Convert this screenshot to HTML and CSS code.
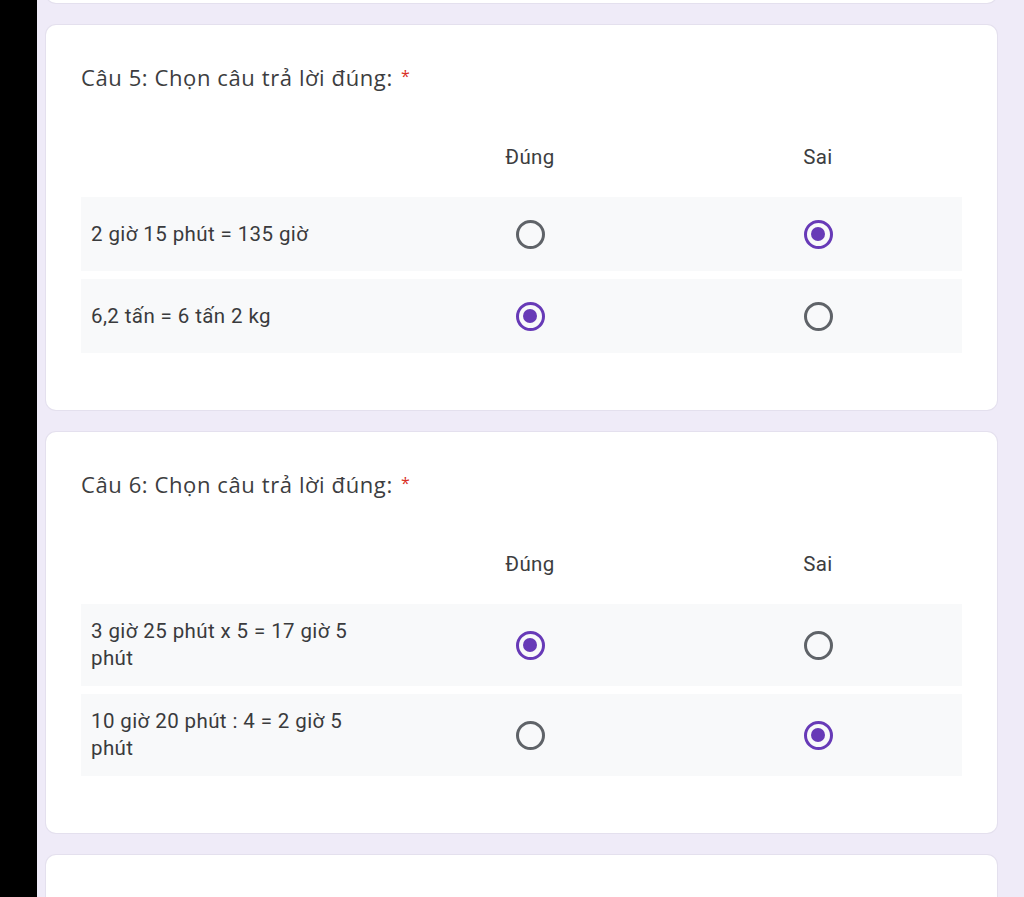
FILE: index.html
```html
<!DOCTYPE html>
<html lang="vi">
<head>
<meta charset="utf-8">
<title>Form</title>
<link rel="stylesheet" href="styles.css">
</head>
<body>
<div class="sidebar"></div>
<main class="main">
  <section class="card card-prev"></section>

  <section class="card">
    <h2 class="title">Câu 5: Chọn câu trả lời đúng: <span class="req">*</span></h2>
    <div class="grid">
      <div class="grid-head">
        <div class="lbl"></div>
        <div class="col">Đúng</div>
        <div class="col">Sai</div>
      </div>
      <div class="grid-row">
        <div class="lbl">2 giờ 15 phút = 135 giờ</div>
        <div class="col"><span class="radio"></span></div>
        <div class="col"><span class="radio on"></span></div>
      </div>
      <div class="grid-row">
        <div class="lbl">6,2 tấn = 6 tấn 2 kg</div>
        <div class="col"><span class="radio on"></span></div>
        <div class="col"><span class="radio"></span></div>
      </div>
    </div>
  </section>

  <section class="card">
    <h2 class="title">Câu 6: Chọn câu trả lời đúng: <span class="req">*</span></h2>
    <div class="grid">
      <div class="grid-head">
        <div class="lbl"></div>
        <div class="col">Đúng</div>
        <div class="col">Sai</div>
      </div>
      <div class="grid-row">
        <div class="lbl">3 giờ 25 phút x 5 = 17 giờ 5 phút</div>
        <div class="col"><span class="radio on"></span></div>
        <div class="col"><span class="radio"></span></div>
      </div>
      <div class="grid-row">
        <div class="lbl">10 giờ 20 phút : 4 = 2 giờ 5 phút</div>
        <div class="col"><span class="radio"></span></div>
        <div class="col"><span class="radio on"></span></div>
      </div>
    </div>
  </section>

  <section class="card card-next"></section>
</main>
</body>
</html>
```

FILE: styles.css
```css
* { box-sizing: border-box; }

html, body {
  margin: 0;
  height: 897px;
  overflow: hidden;
}

body {
  display: flex;
  font-family: Roboto, "Liberation Sans", sans-serif;
  color: #3a3b3d;
  background: #efebf8;
}

.sidebar {
  width: 37px;
  flex: none;
  background: #000;
}

.main {
  flex: 1;
  display: flex;
  flex-direction: column;
  gap: 22px;
  padding: 0 27px 0 9px;
  background: #efebf8;
}

.card {
  background: #fff;
  border-radius: 10px;
  box-shadow: 0 0 0 1px #e4e0ee;
  padding: 34px 35px 57px 35px;
  flex: none;
}

.card-prev {
  margin-top: -30px;
  height: 33px;
  padding: 0;
}

.card-next {
  height: 200px;
  padding: 0;
}

.title {
  margin: 0;
  font-family: "Open Sans", Roboto, sans-serif;
  font-weight: 400;
  font-size: 22px;
  line-height: 34px;
  color: #3c3d40;
  letter-spacing: 0.6px;
}

.req {
  color: #d93025;
  font-size: 16px;
  vertical-align: 4px;
  margin-left: 2px;
}

.grid {
  margin-top: 43px;
  display: flex;
  flex-direction: column;
  gap: 8px;
}

.grid-head,
.grid-row {
  display: grid;
  grid-template-columns: 305px 1fr 1fr;
  align-items: center;
  font-size: 20.5px;
  letter-spacing: 0.4px;
}

.grid-head {
  height: 40px;
  margin-bottom: 12px;
  color: #3c3d40;
}

.grid-row {
  min-height: 74px;
  padding: 14px 0;
  background: #f8f9fa;
  line-height: 27px;
}

.lbl {
  padding: 0 20px 0 10px;
}

.col {
  display: flex;
  justify-content: center;
  align-items: center;
}

.radio {
  width: 29px;
  height: 29px;
  border-radius: 50%;
  border: 3px solid #5f6368;
  display: flex;
  align-items: center;
  justify-content: center;
}

.radio.on {
  border-color: #673ab7;
}

.radio.on::after {
  content: "";
  width: 14px;
  height: 14px;
  border-radius: 50%;
  background: #673ab7;
}
```
